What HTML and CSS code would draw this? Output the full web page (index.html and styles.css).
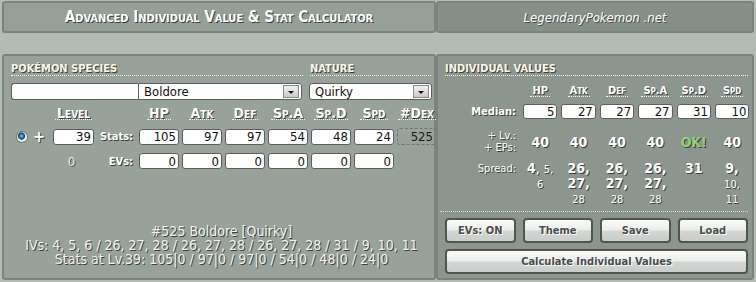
FILE: index.html
```html
<!DOCTYPE html>
<html>
  <head>
    <meta name="viewport" content="width=device-width, initial-scale=1" />
    <title>Advanced Individual Value &amp; Stat Calculator</title>
    <link rel="stylesheet" href="styles.css">
  </head>

  <body>
    <div class="top">
      <div class="box title-box">
        <h1 class="title">Advanced Individual Value &amp; Stat Calculator</h1>
      </div>
      <div class="box site-box">
        <span class="site">LegendaryPokemon .net</span>
      </div>
    </div>

    <div class="main">
      <!-- Stats input side -->
      <div class="box left">
        <div class="heads">
          <h2 class="sect species-h">Pokémon Species</h2>
          <h2 class="sect nature-h">Nature</h2>
        </div>
        <div class="pick">
          <input class="blank" type="text" value="" />
          <div class="sel species-sel">Boldore<span class="arrow"></span></div>
          <div class="sel nature-sel">Quirky<span class="arrow"></span></div>
        </div>

        <div class="stat-grid">
          <span></span>
          <span class="th"><abbr>Level</abbr></span>
          <span></span>
          <span class="th"><abbr>HP</abbr></span>
          <span class="th"><abbr>Atk</abbr></span>
          <span class="th"><abbr>Def</abbr></span>
          <span class="th"><abbr>Sp.A</abbr></span>
          <span class="th"><abbr>Sp.D</abbr></span>
          <span class="th"><abbr>Spd</abbr></span>
          <span class="th"><abbr>#Dex</abbr></span>

          <span class="mode"><span class="radio"></span><span class="plus">+</span></span>
          <input class="num" type="text" value="39" />
          <span class="lbl">Stats:</span>
          <input class="num" type="text" value="105" />
          <input class="num" type="text" value="97" />
          <input class="num" type="text" value="97" />
          <input class="num" type="text" value="54" />
          <input class="num" type="text" value="48" />
          <input class="num" type="text" value="24" />
          <span class="dex">525</span>

          <span></span>
          <span class="ev-total">0</span>
          <span class="lbl">EVs:</span>
          <input class="num" type="text" value="0" />
          <input class="num" type="text" value="0" />
          <input class="num" type="text" value="0" />
          <input class="num" type="text" value="0" />
          <input class="num" type="text" value="0" />
          <input class="num" type="text" value="0" />
        </div>

        <div class="summary">
          <p>#525 Boldore [Quirky]</p>
          <p>IVs: 4, 5, 6 / 26, 27, 28 / 26, 27, 28 / 26, 27, 28 / 31 / 9, 10, 11</p>
          <p>Stats at Lv.39: 105|0 / 97|0 / 97|0 / 54|0 / 48|0 / 24|0</p>
        </div>
      </div>

      <!-- Results side -->
      <div class="box right">
        <h2 class="sect">Individual Values</h2>
        <div class="iv-grid">
          <span></span>
          <span class="th"><abbr>HP</abbr></span>
          <span class="th"><abbr>Atk</abbr></span>
          <span class="th"><abbr>Def</abbr></span>
          <span class="th"><abbr>Sp.A</abbr></span>
          <span class="th"><abbr>Sp.D</abbr></span>
          <span class="th"><abbr>Spd</abbr></span>

          <span class="lbl median-lbl">Median:</span>
          <input class="num" type="text" value="5" />
          <input class="num" type="text" value="27" />
          <input class="num" type="text" value="27" />
          <input class="num" type="text" value="27" />
          <input class="num" type="text" value="31" />
          <input class="num" type="text" value="10" />

          <span class="lbl light lv-lbl">+ Lv.:<br />+ EPs:</span>
          <span class="need">40</span>
          <span class="need">40</span>
          <span class="need">40</span>
          <span class="need">40</span>
          <span class="need ok">OK!</span>
          <span class="need">40</span>

          <span class="lbl light spread-lbl">Spread:</span>
          <span class="spread"><b>4</b>, <small>5,</small><br /><small>6</small></span>
          <span class="spread"><b>26,</b><br /><b>27,</b><br /><small>28</small></span>
          <span class="spread"><b>26,</b><br /><b>27,</b><br /><small>28</small></span>
          <span class="spread"><b>26,</b><br /><b>27,</b><br /><small>28</small></span>
          <span class="spread"><b>31</b></span>
          <span class="spread"><b>9,</b><br /><small>10,</small><br /><small>11</small></span>
        </div>

        <div class="actions">
          <div class="btn-row">
            <button>EVs: ON</button>
            <button>Theme</button>
            <button>Save</button>
            <button>Load</button>
          </div>
          <button class="calc">Calculate Individual Values</button>
        </div>
      </div>
    </div>
  </body>
</html>
```

FILE: styles.css
```css
* {
  box-sizing: border-box;
}

body {
  margin: 0;
  width: 756px;
  background-color: #b3bbb5;
  font-family: "DejaVu Sans Condensed", "DejaVu Sans", sans-serif;
  color: #fff;
}

.top {
  display: flex;
  height: 33px;
  padding: 1px 2px 0 2px;
}

.main {
  display: flex;
  height: 226px;
  margin-top: 21px;
  padding: 0 2px;
}

.box {
  border: 2px solid #7b837d;
  border-radius: 3px;
}

.title-box {
  width: 434px;
  background-color: #959f97;
  display: flex;
  align-items: center;
  justify-content: center;
}

.site-box {
  width: 318px;
  background-color: #878f89;
  display: flex;
  align-items: center;
  justify-content: center;
}

.title {
  margin: 0;
  font-size: 15px;
  font-variant: small-caps;
  font-weight: bold;
  text-shadow: 1px 1px 0 #3c403d;
}

.site {
  font-size: 13px;
  font-style: italic;
  text-shadow: 1px 1px 0 #4a4f4b;
}

/* Panels */
.left {
  width: 434px;
  background-color: #98a29a;
  padding: 6px 2px 12px 7px;
  display: flex;
  flex-direction: column;
}

.right {
  width: 318px;
  background-color: #8d958f;
  padding: 6px 4px 4px 7px;
  display: flex;
  flex-direction: column;
}

.sect {
  margin: 0;
  font-size: 11px;
  line-height: 13px;
  font-weight: bold;
  text-transform: uppercase;
  color: #fbf7e6;
  text-shadow: 1px 1px 0 #3c403d;
  border-bottom: 1px dotted #f4f4f0;
}

.heads {
  display: flex;
  gap: 7px;
}

.species-h {
  width: 292px;
}

.nature-h {
  width: 121px;
}

.pick {
  display: flex;
  margin-top: 7px;
  height: 17px;
}

.blank {
  width: 127px;
  height: 17px;
  border: 1px solid #5c5f5d;
  border-right: none;
  border-radius: 3px 0 0 3px;
  background-color: #fff;
  padding: 0;
}

.sel {
  position: relative;
  height: 17px;
  border: 1px solid #5c5f5d;
  background-color: #fff;
  color: #111;
  font-size: 13px;
  line-height: 15px;
  padding-left: 5px;
}

.species-sel {
  width: 164px;
  border-radius: 0 3px 3px 0;
}

.nature-sel {
  width: 123px;
  margin-left: 7px;
  border-radius: 3px;
}

/* the little drop-down button */
.arrow {
  position: absolute;
  top: 1px;
  right: 2px;
  width: 16px;
  height: 13px;
  border: 1px solid #8a8a8a;
  background: linear-gradient(#f2f2f2, #c9c9c9);
}

.arrow:after {
  content: "";
  position: absolute;
  left: 4px;
  top: 5px;
  border-left: 3px solid transparent;
  border-right: 3px solid transparent;
  border-top: 3px solid #111;
}

/* Column headers with dotted underline */
.th {
  display: flex;
  justify-content: center;
}

.th abbr {
  display: block;
  font-variant: small-caps;
  font-weight: bold;
  text-decoration: none;
  text-shadow: 1px 1px 0 #3c403d;
  border-bottom: 1px dotted #f4f4f0;
  padding: 0 2px;
}

.stat-grid {
  display: grid;
  grid-template-columns: 39px 41px 39px repeat(7, 40px);
  column-gap: 3px;
  row-gap: 8px;
  margin-top: 8px;
  align-items: center;
}

.stat-grid .th abbr {
  font-size: 14px;
  line-height: 11px;
}

.num {
  width: 100%;
  height: 16px;
  border: 1px solid #5c5f5d;
  border-radius: 3px;
  background-color: #fff;
  color: #111;
  font-family: inherit;
  font-size: 13px;
  text-align: right;
  padding: 0 2px;
}

.dex {
  height: 17px;
  border: 1px dashed #6f7570;
  border-radius: 3px;
  color: #1a1a1a;
  font-size: 13px;
  line-height: 15px;
  text-align: right;
  padding-right: 3px;
}

.mode {
  display: flex;
  align-items: center;
  gap: 6px;
  padding-left: 6px;
}

.radio {
  width: 10px;
  height: 10px;
  border-radius: 50%;
  box-shadow: 0 0 0 1px #6d746f;
  background: radial-gradient(circle at 45% 40%, #9ad6f7 0, #2a86c4 1.5px, #0d4a7c 3px, #5b6a72 3.5px, #e4e7e5 4px, #f4f5f4 5px);
}

.plus {
  font-size: 16px;
  line-height: 15px;
  font-weight: bold;
  text-shadow: 1px 1px 0 #3c403d;
}

.ev-total {
  text-align: center;
  font-size: 13px;
  color: #eef0ee;
  text-shadow: 1px 1px 0 #4a4f4b;
  padding-right: 4px;
}

.lbl {
  font-size: 11px;
  font-weight: bold;
  text-align: right;
  text-shadow: 1px 1px 0 #3c403d;
  padding-right: 3px;
}

.lbl.light {
  font-weight: normal;
}

.summary {
  margin-top: auto;
  text-align: center;
  font-size: 14px;
  color: #f2f2ee;
  text-shadow: 1px 1px 0 #3c403d;
}

.summary p {
  margin: 0;
  height: 14px;
  line-height: 14px;
}

/* Right side grid */
.iv-grid {
  display: grid;
  grid-template-columns: 74px repeat(6, 34.4px);
  column-gap: 4px;
  margin-top: 10px;
}

.iv-grid .th abbr {
  font-size: 11px;
  line-height: 10px;
}

.iv-grid .num {
  height: 15px;
  margin-top: 7px;
}

.median-lbl {
  margin-top: 7px;
  line-height: 15px;
}

.lv-lbl {
  margin-top: 11px;
  line-height: 12px;
}

.need {
  margin-top: 11px;
  align-self: center;
  text-align: center;
  font-size: 14px;
  font-weight: bold;
  text-shadow: 1px 1px 0 #3c403d;
}

.need.ok {
  color: #8fd36a;
}

.spread-lbl {
  margin-top: 7px;
  line-height: 15px;
}

.spread {
  margin-top: 7px;
  text-align: center;
  font-size: 14px;
  line-height: 15px;
  text-shadow: 1px 1px 0 #3c403d;
}

.spread b {
  font-size: 14px;
  line-height: 15px;
}

.spread small {
  font-size: 11px;
  line-height: 12px;
}

.actions {
  margin-top: 5px;
  margin-left: -5px;
  padding: 6px 0 0 5px;
  border-top: 1px dotted #d8dcd8;
}

.btn-row {
  display: grid;
  grid-template-columns: repeat(4, 1fr);
  gap: 7px;
}

button {
  height: 25px;
  border: 2px solid #4f5551;
  border-radius: 4px;
  background: linear-gradient(#fbfbfb, #eceeec 45%, #d3d7d3 55%, #c9cdc9);
  color: #4a4d4b;
  font-family: inherit;
  font-size: 11px;
  font-weight: bold;
  text-shadow: 1px 1px 0 #fff;
  padding: 0;
}

.calc {
  width: 100%;
  margin-top: 6px;
}
```
